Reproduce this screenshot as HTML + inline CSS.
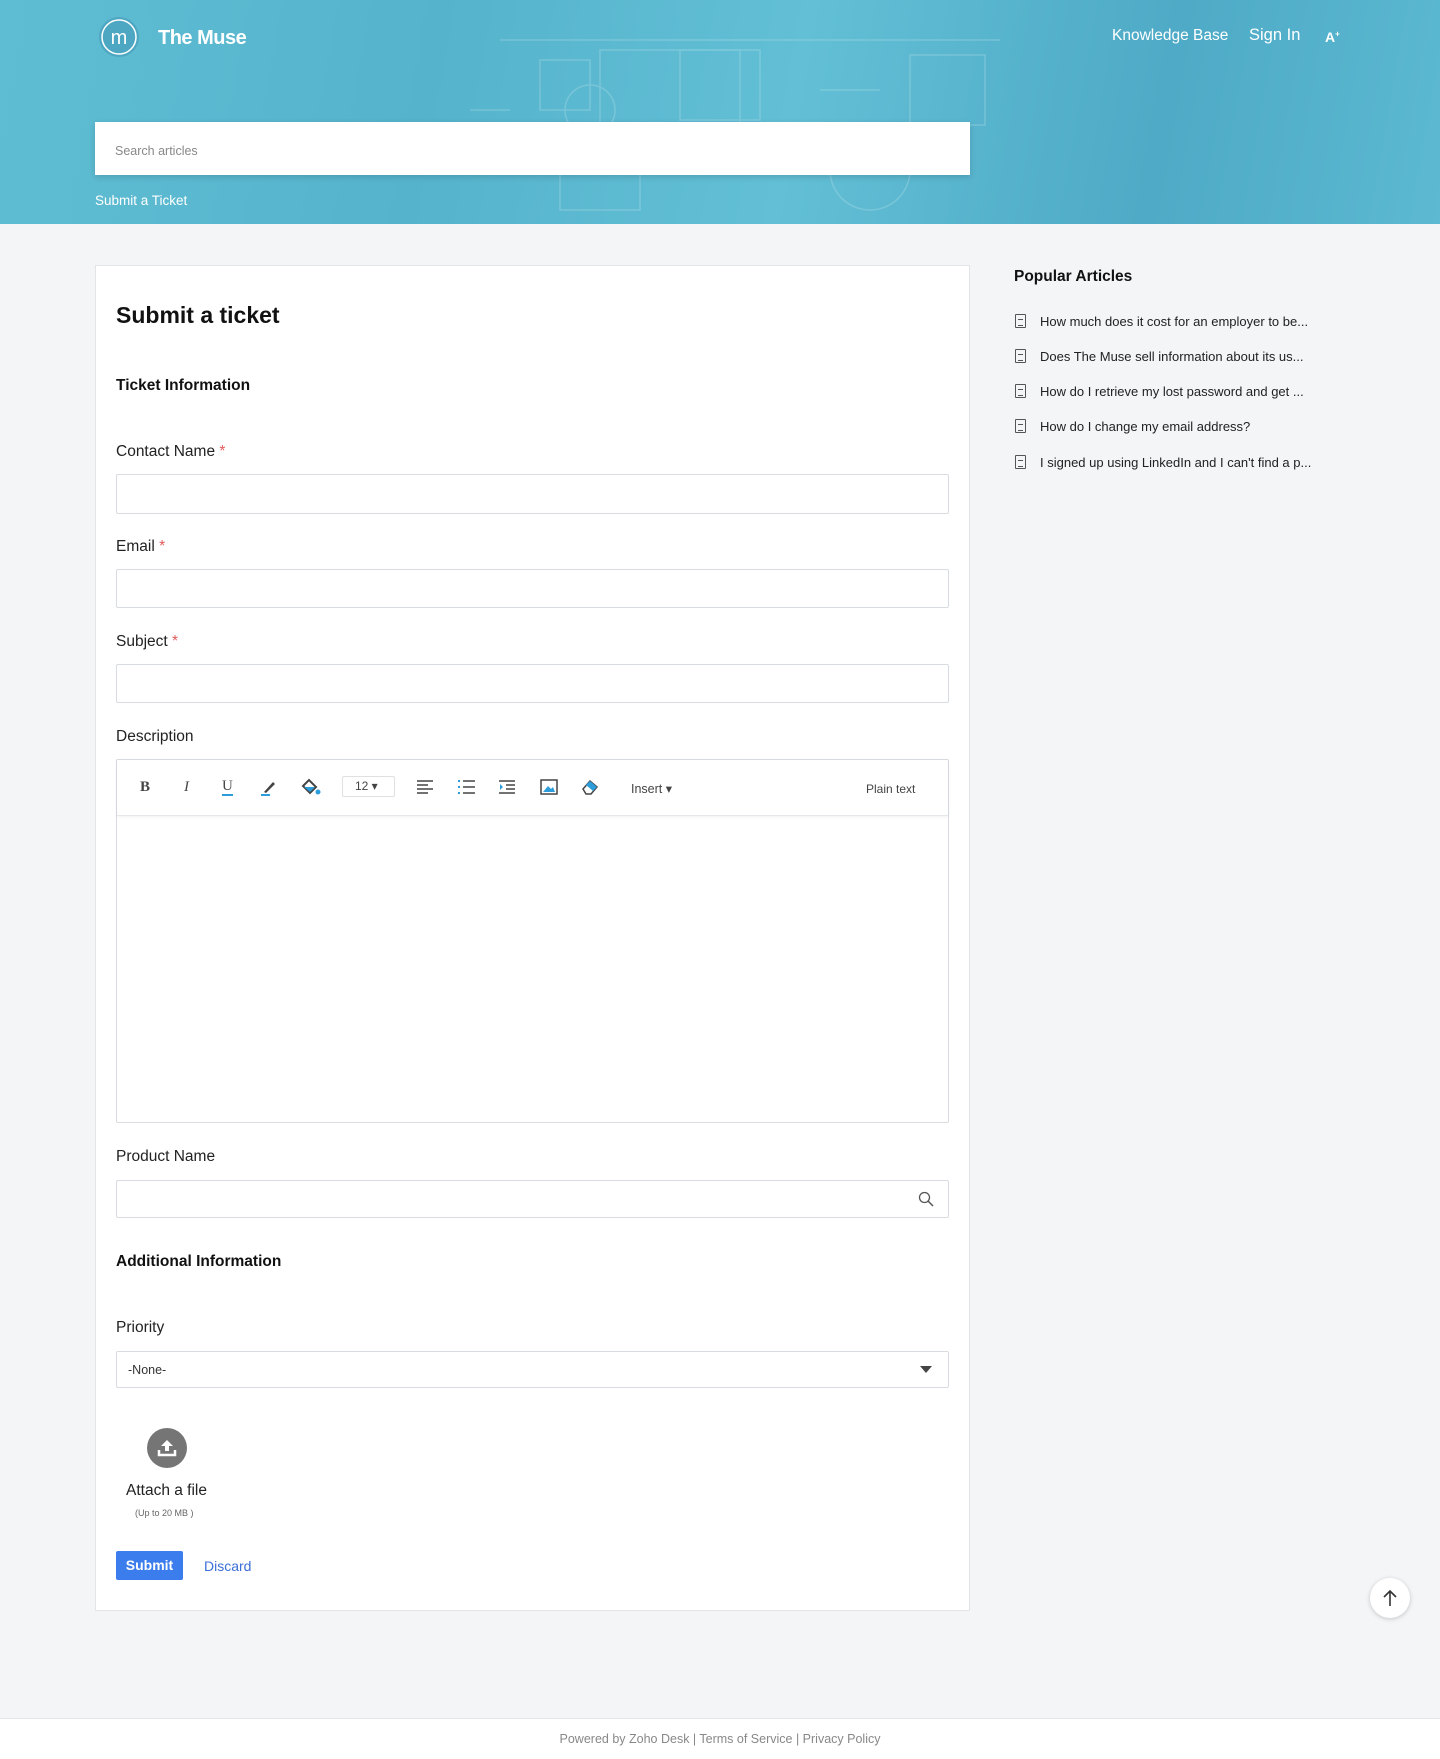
<!DOCTYPE html>
<html><head><meta charset="utf-8"><style>
*{box-sizing:border-box;margin:0;padding:0}
body{width:1440px;height:1759px;background:#f3f5f7;font-family:"Liberation Sans",sans-serif;position:relative;color:#111;overflow:hidden}
.a{position:absolute}
.hdr{left:0;top:0;width:1440px;height:224px;background:linear-gradient(100deg,#5fbdd3 0%,#55b3cc 30%,#62bfd5 55%,#4eaac6 80%,#5cb9d1 100%)}
.lbl{font-size:15.5px;color:#222;left:116px}
.req{color:#e05a5a}
.inp{left:116px;width:833px;height:40px;background:#fff;border:1px solid #d8dbe0;border-radius:2px}
.art{left:1040px;font-size:13px;color:#222}
.ic{left:1015px;width:11px;height:14px;border:1.3px solid #555;border-radius:1px}
.ic:after{content:"";position:absolute;left:2px;top:4px;width:5px;height:5px;border-top:1px solid #555;border-bottom:1px solid #555}
.tb{top:779px;font-size:15px;color:#444}
</style></head><body>
<div class="a hdr"></div>
<svg class="a" style="left:0;top:0" width="1440" height="224" opacity="0.18"><g stroke="#fff" fill="none" stroke-width="1.5"><rect x="600" y="50" width="140" height="80"/><rect x="540" y="60" width="50" height="50"/><rect x="680" y="50" width="80" height="70"/><rect x="910" y="55" width="75" height="70"/><circle cx="590" cy="110" r="25"/><path d="M500 40 L1000 40 M470 110 L510 110 M820 90 L880 90"/><rect x="560" y="150" width="80" height="60"/><circle cx="870" cy="170" r="40"/></g></svg>
<svg class="a" style="left:98px;top:16px" width="42" height="42"><circle cx="21" cy="21" r="20" fill="#4da7c2"/><circle cx="21" cy="21" r="17" fill="none" stroke="#fff" stroke-width="1.5"/><text x="21" y="28" text-anchor="middle" font-family="Liberation Sans" font-size="20" fill="#fff">m</text></svg>
<div class="a" style="left:158px;top:27px;font-size:20px;font-weight:bold;color:#fff;letter-spacing:-0.5px">The Muse</div>
<div class="a" style="left:1112px;top:27px;font-size:15.5px;color:#fff">Knowledge Base</div>
<div class="a" style="left:1249px;top:26px;font-size:16.5px;color:#fff">Sign In</div>
<div class="a" style="left:1325px;top:29px;font-size:14px;color:#fff;font-weight:bold">A<sup style="font-size:8px">+</sup></div>
<div class="a" style="left:95px;top:122px;width:875px;height:53px;background:#fff;box-shadow:0 2px 6px rgba(0,0,0,.15)"></div>
<div class="a" style="left:115px;top:144px;font-size:12.5px;color:#888">Search articles</div>
<div class="a" style="left:95px;top:193px;font-size:13.5px;color:#fff">Submit a Ticket</div>

<div class="a" style="left:95px;top:265px;width:875px;height:1346px;background:#fff;border:1px solid #e2e4e8"></div>
<div class="a" style="left:116px;top:302px;font-size:23px;font-weight:bold">Submit a ticket</div>
<div class="a" style="left:116px;top:377px;font-size:15.5px;font-weight:bold">Ticket Information</div>
<div class="a lbl" style="top:443px">Contact Name <span class="req">*</span></div>
<div class="a inp" style="top:474px"></div>
<div class="a lbl" style="top:538px">Email <span class="req">*</span></div>
<div class="a inp" style="top:569px;height:39px"></div>
<div class="a lbl" style="top:633px">Subject <span class="req">*</span></div>
<div class="a inp" style="top:664px;height:39px"></div>
<div class="a lbl" style="top:728px">Description</div>
<div class="a inp" style="top:759px;height:364px"></div>
<div class="a" style="left:117px;top:760px;width:831px;height:56px;border-bottom:1px solid #e6e8ec;box-shadow:0 1px 3px rgba(0,0,0,.06)"></div>
<div class="a tb" style="left:140px;font-weight:bold;font-family:'Liberation Serif',serif">B</div>
<div class="a tb" style="left:184px;font-style:italic;font-family:'Liberation Serif',serif">I</div>
<div class="a tb" style="left:222px;font-family:'Liberation Serif',serif;border-bottom:2px solid #2d9cdb;line-height:15px">U</div>
<svg class="a" style="left:260px;top:778px" width="18" height="18"><path d="M4 14 L13 4 L15 6 L6 15 Z" fill="#444"/><path d="M1 17 H10" stroke="#2d9cdb" stroke-width="2"/></svg>
<svg class="a" style="left:300px;top:778px" width="22" height="18"><path d="M3 8 L9 2 L16 9 L10 15 Z" fill="none" stroke="#444" stroke-width="2"/><circle cx="18" cy="14" r="2.5" fill="#2d9cdb"/><path d="M4 9 L15 9 L10 14Z" fill="#2d9cdb"/></svg>
<div class="a" style="left:342px;top:776px;width:53px;height:21px;border:1px solid #e0e0e0;border-radius:2px;font-size:12px;color:#444;padding:2px 0 0 12px">12 ▾</div>
<svg class="a" style="left:417px;top:780px" width="18" height="14"><path d="M0 1H16M0 5H11M0 9H16M0 13H11" stroke="#444" stroke-width="1.6"/></svg>
<svg class="a" style="left:458px;top:780px" width="18" height="14"><path d="M0 1H2M0 7H2M0 13H2" stroke="#2d9cdb" stroke-width="2"/><path d="M5 1H17M5 7H17M5 13H17" stroke="#444" stroke-width="1.6"/></svg>
<svg class="a" style="left:499px;top:780px" width="18" height="14"><path d="M0 1H16M7 5H16M7 9H16M0 13H16" stroke="#444" stroke-width="1.6"/><path d="M1 4L4 7L1 10Z" fill="#2d9cdb"/></svg>
<svg class="a" style="left:540px;top:779px" width="18" height="16"><rect x="1" y="1" width="16" height="14" fill="none" stroke="#444" stroke-width="1.5"/><path d="M3 13L8 7L11 10L13 8L15 13Z" fill="#2d9cdb"/></svg>
<svg class="a" style="left:580px;top:778px" width="20" height="18"><path d="M3 11 L10 3 L17 9 L11 16 L6 16 Z" fill="none" stroke="#444" stroke-width="1.5"/><path d="M10 3L17 9L13 13L6 7Z" fill="#2d9cdb"/></svg>
<div class="a" style="left:631px;top:781px;font-size:12.5px;color:#444">Insert ▾</div>
<div class="a" style="left:866px;top:782px;font-size:12px;color:#444">Plain text</div>
<div class="a lbl" style="top:1148px">Product Name</div>
<div class="a inp" style="top:1180px;height:38px"></div>
<svg class="a" style="left:918px;top:1191px" width="16" height="16"><circle cx="6.5" cy="6.5" r="5" fill="none" stroke="#555" stroke-width="1.3"/><path d="M10 10L15 15" stroke="#555" stroke-width="1.5"/></svg>
<div class="a" style="left:116px;top:1253px;font-size:15.5px;font-weight:bold">Additional Information</div>
<div class="a lbl" style="top:1319px">Priority</div>
<div class="a inp" style="top:1351px;height:37px"></div>
<div class="a" style="left:128px;top:1363px;font-size:12.5px;color:#333">-None-</div>
<svg class="a" style="left:920px;top:1366px" width="12" height="8"><path d="M0 0H12L6 7Z" fill="#444"/></svg>
<svg class="a" style="left:147px;top:1428px" width="40" height="40"><circle cx="20" cy="20" r="20" fill="#757575"/><path d="M20 12 L26 18 H22 V23 H18 V18 H14 Z" fill="#fff"/><path d="M12 22 V27 H28 V22" fill="none" stroke="#fff" stroke-width="2.5"/></svg>
<div class="a" style="left:126px;top:1482px;font-size:15.5px;color:#222">Attach a file</div>
<div class="a" style="left:135px;top:1508px;font-size:9px;color:#666">(Up to 20 MB )</div>
<div class="a" style="left:116px;top:1551px;width:67px;height:29px;background:#3b7ded;border-radius:2px;color:#fff;font-size:14px;font-weight:bold;text-align:center;line-height:29px">Submit</div>
<div class="a" style="left:204px;top:1558px;font-size:14px;color:#3b6fd6">Discard</div>

<div class="a" style="left:1014px;top:268px;font-size:15.5px;font-weight:bold">Popular Articles</div>
<div class="a ic" style="top:314px"></div><div class="a art" style="top:314px">How much does it cost for an employer to be...</div>
<div class="a ic" style="top:349px"></div><div class="a art" style="top:349px">Does The Muse sell information about its us...</div>
<div class="a ic" style="top:384px"></div><div class="a art" style="top:384px">How do I retrieve my lost password and get ...</div>
<div class="a ic" style="top:419px"></div><div class="a art" style="top:419px">How do I change my email address?</div>
<div class="a ic" style="top:455px"></div><div class="a art" style="top:455px">I signed up using LinkedIn and I can't find a p...</div>

<div class="a" style="left:1370px;top:1578px;width:40px;height:40px;border-radius:50%;background:#fff;box-shadow:0 1px 5px rgba(0,0,0,.2)"></div>
<svg class="a" style="left:1382px;top:1589px" width="16" height="18"><path d="M8 17V2M2 8L8 2L14 8" fill="none" stroke="#333" stroke-width="1.6"/></svg>
<div class="a" style="left:0;top:1718px;width:1440px;height:41px;background:#fff;border-top:1px solid #e3e5e8"></div>
<div class="a" style="left:0;top:1732px;width:1440px;text-align:center;font-size:12.5px;color:#888">Powered by Zoho Desk | Terms of Service | Privacy Policy</div>
</body></html>
